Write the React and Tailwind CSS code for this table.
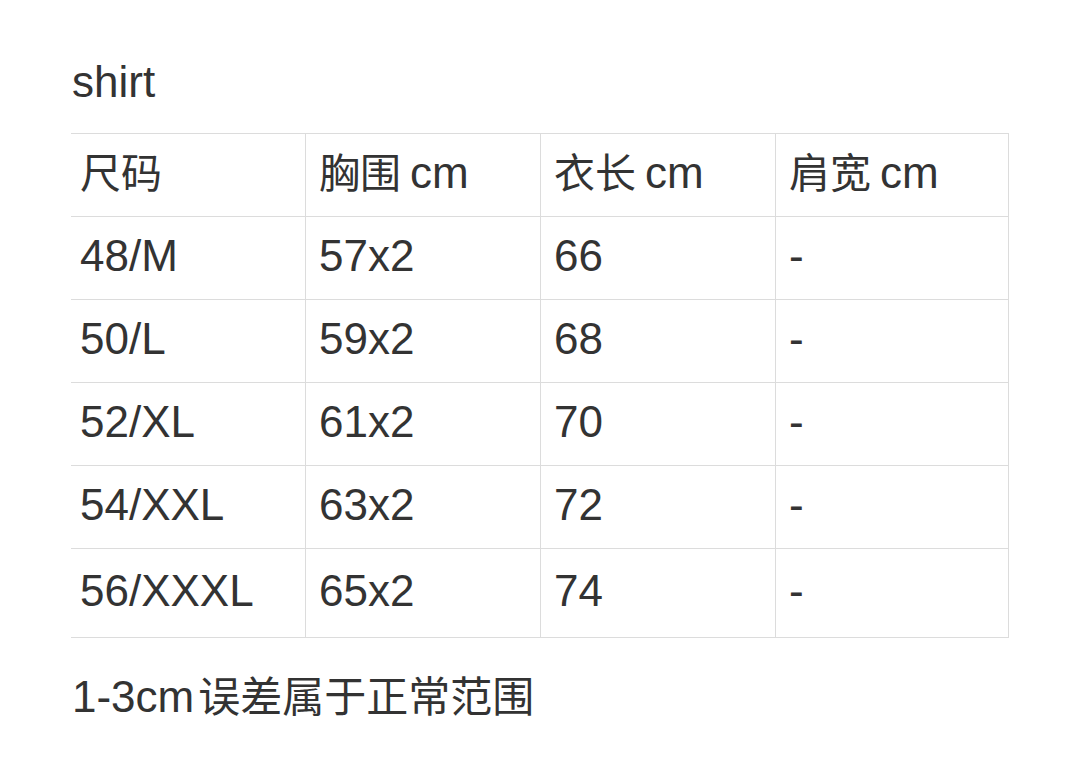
const rows = [
  ["48/M", "57x2", "66", "-"],
  ["50/L", "59x2", "68", "-"],
  ["52/XL", "61x2", "70", "-"],
  ["54/XXL", "63x2", "72", "-"],
  ["56/XXXL", "65x2", "74", "-"],
];

const widths = ["w-[234px]", "w-[235px]", "w-[235px]", "w-[233px]"];

function Head({ zh, unit }) {
  return (
    <span>
      <span className="text-[41px]">{zh}</span>
      {unit && <span className="ml-[9px]">{unit}</span>}
    </span>
  );
}

function Row({ cells, last }) {
  return (
    <div className={`flex ${last ? "h-[89px]" : "h-[83px]"} border-b border-[#dcdcdc]`}>
      {cells.map((c, i) => (
        <div
          key={i}
          className={`${widths[i]} ${i > 0 ? "border-l border-[#dcdcdc] pl-[13px]" : "pl-[9px]"} flex items-center pb-[4px]`}
        >
          {c}
        </div>
      ))}
    </div>
  );
}

export default function App() {
  const head = [
    <Head zh="尺码" />,
    <Head zh="胸围" unit="cm" />,
    <Head zh="衣长" unit="cm" />,
    <Head zh="肩宽" unit="cm" />,
  ];
  return (
    <div className="min-h-screen bg-white pl-[71px] pt-[60px] text-[#333333] font-['Liberation_Sans','Noto_Sans_CJK_SC',sans-serif] text-[44px] leading-none">
      <div className="pl-[1px] mb-[29px]">shirt</div>
      <div className="w-[938px] border-t border-r border-[#dcdcdc]">
        <Row cells={head} />
        {rows.map((r, i) => (
          <Row key={i} cells={r} last={i === rows.length - 1} />
        ))}
      </div>
      <div className="mt-[37px] pl-[1px]">
        1-3cm<span className="text-[42px] pl-[4px]">误差属于正常范围</span>
      </div>
    </div>
  );
}
